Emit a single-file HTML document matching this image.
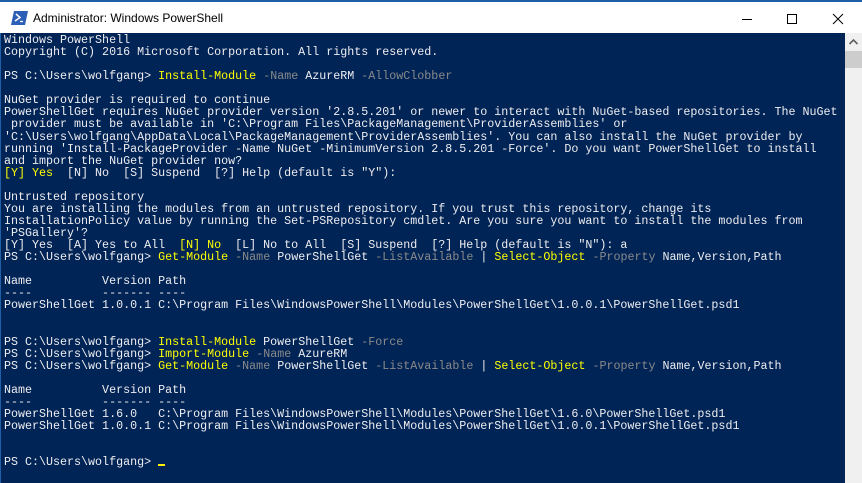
<!DOCTYPE html>
<html><head><meta charset="utf-8"><style>
html,body{margin:0;padding:0;width:862px;height:483px;overflow:hidden;background:#012456}
#tb{position:absolute;left:0;top:0;width:862px;height:33px;background:#fff;border-top:2px solid #1e5fa8;box-sizing:border-box}
#tt{position:absolute;left:33px;top:9px;font:12px "Liberation Sans",sans-serif;color:#000}
#con{position:absolute;left:0;top:33px;width:845px;height:450px;background:#012456;border-left:1px solid #1e5fa8;box-sizing:border-box}
pre{margin:0;position:absolute;left:3px;top:1px;font:11.68px/12.06px "Liberation Mono",monospace;color:#eeedf0;white-space:pre}
.y{color:#ffff00}.g{color:#8a8a8a}
#sb{position:absolute;left:845px;top:33px;width:17px;height:450px;background:#f0f0f0}
#th{position:absolute;left:845px;top:51px;width:17px;height:17px;background:#cdcdcd}
.cur{display:inline-block;width:7px;height:2px;background:#fff000;vertical-align:-1px}
</style></head><body>
<div id="tb">
<svg style="position:absolute;left:11px;top:9px" width="17" height="14" viewBox="0 0 17 14"><path d="M3 0H17L14 14H0Z" fill="#2c5fb5"/><path d="M5 3l4 3.5-5 3.5" stroke="#fff" stroke-width="1.5" fill="none"/><path d="M9 10.5h3" stroke="#fff" stroke-width="1.3"/></svg>
<div id="tt">Administrator: Windows PowerShell</div>
<svg style="position:absolute;left:737px;top:10px" width="110" height="14"><path d="M5 7.5h10" stroke="#000" stroke-width="1"/><rect x="50.5" y="2.5" width="9" height="9" fill="none" stroke="#000"/><path d="M96 2l10 10M106 2l-10 10" stroke="#000" stroke-width="1"/></svg>
</div>
<div id="con"><pre>Windows PowerShell
Copyright (C) 2016 Microsoft Corporation. All rights reserved.

PS C:\Users\wolfgang&gt; <span class="y">Install-Module</span> <span class="g">-Name</span> AzureRM <span class="g">-AllowClobber</span>

NuGet provider is required to continue
PowerShellGet requires NuGet provider version '2.8.5.201' or newer to interact with NuGet-based repositories. The NuGet
 provider must be available in 'C:\Program Files\PackageManagement\ProviderAssemblies' or
'C:\Users\wolfgang\AppData\Local\PackageManagement\ProviderAssemblies'. You can also install the NuGet provider by
running 'Install-PackageProvider -Name NuGet -MinimumVersion 2.8.5.201 -Force'. Do you want PowerShellGet to install
and import the NuGet provider now?
<span class="y">[Y] Yes</span>  [N] No  [S] Suspend  [?] Help (default is "Y"):

Untrusted repository
You are installing the modules from an untrusted repository. If you trust this repository, change its
InstallationPolicy value by running the Set-PSRepository cmdlet. Are you sure you want to install the modules from
'PSGallery'?
[Y] Yes  [A] Yes to All  <span class="y">[N] No</span>  [L] No to All  [S] Suspend  [?] Help (default is "N"): a
PS C:\Users\wolfgang&gt; <span class="y">Get-Module</span> <span class="g">-Name</span> PowerShellGet <span class="g">-ListAvailable</span> | <span class="y">Select-Object</span> <span class="g">-Property</span> Name,Version,Path

Name          Version Path
----          ------- ----
PowerShellGet 1.0.0.1 C:\Program Files\WindowsPowerShell\Modules\PowerShellGet\1.0.0.1\PowerShellGet.psd1


PS C:\Users\wolfgang&gt; <span class="y">Install-Module</span> PowerShellGet <span class="g">-Force</span>
PS C:\Users\wolfgang&gt; <span class="y">Import-Module</span> <span class="g">-Name</span> AzureRM
PS C:\Users\wolfgang&gt; <span class="y">Get-Module</span> <span class="g">-Name</span> PowerShellGet <span class="g">-ListAvailable</span> | <span class="y">Select-Object</span> <span class="g">-Property</span> Name,Version,Path

Name          Version Path
----          ------- ----
PowerShellGet 1.6.0   C:\Program Files\WindowsPowerShell\Modules\PowerShellGet\1.6.0\PowerShellGet.psd1
PowerShellGet 1.0.0.1 C:\Program Files\WindowsPowerShell\Modules\PowerShellGet\1.0.0.1\PowerShellGet.psd1


PS C:\Users\wolfgang&gt; <span class="cur"></span></pre></div>
<div id="sb"></div><div id="th"></div>
<svg style="position:absolute;left:848px;top:38px" width="11" height="8"><path d="M1.5 6l4-4 4 4" stroke="#606060" stroke-width="1.6" fill="none"/></svg>
</body></html>
